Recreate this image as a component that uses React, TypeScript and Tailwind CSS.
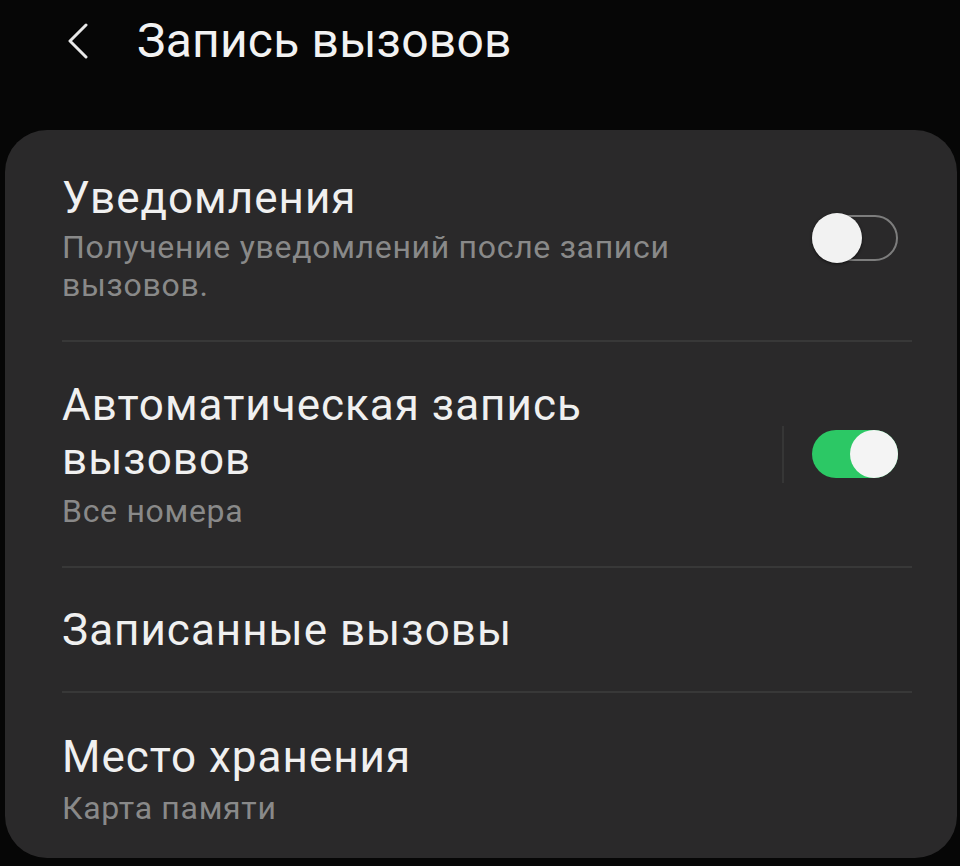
import React from 'react';

const font = { fontFamily: 'Roboto, "Noto Sans", sans-serif' };

const Toggle = ({ on }: { on: boolean }) =>
    on ? (
        <div className="relative w-[86px] h-[48px] rounded-full bg-[#2cc865] shrink-0">
            <div className="absolute right-0 top-0 w-[48px] h-[48px] rounded-full bg-[#f4f4f4]" />
        </div>
    ) : (
        <div className="relative w-[86px] h-[46px] rounded-full border-2 border-[#7d7d7d] shrink-0">
            <div className="absolute left-[-2px] top-[-4px] w-[50px] h-[50px] rounded-full bg-[#f2f2f2] shadow-[0_1px_3px_rgba(0,0,0,0.6)]" />
        </div>
    );

const Divider = () => <div className="h-[2px] bg-[#383838] ml-[57px] mr-[45px]" />;

const title = 'text-[44px] leading-[52px] tracking-[1px] text-[#f0f0f0]';
const sub = 'text-[32px] leading-[38px] tracking-[0.7px] text-[#898989]';

export default function App() {
    return (
        <div className="w-[960px] h-[866px] bg-[#060606] overflow-hidden" style={font}>
            {/* header */}
            <div className="flex items-center h-[56px] mt-[13px] pl-[67px]">
                <svg width="22" height="36" viewBox="0 0 22 36" fill="none" className="shrink-0">
                    <path d="M19 2 L3 18 L19 34" stroke="#e8e8e8" strokeWidth="3" strokeLinecap="round" strokeLinejoin="round" />
                </svg>
                <h1 className="ml-[48px] text-[48px] leading-[56px] tracking-[0.2px] text-[#f2f2f2]">Запись вызовов</h1>
            </div>

            {/* card */}
            <div className="mt-[61px] ml-[5px] mr-[3px] h-[728px] rounded-[42px] bg-[#2a292a]">
                {/* notifications */}
                <div className="flex items-center pl-[57px] pr-[59px] pt-[42px] pb-[36px]">
                    <div className="flex-1 max-w-[660px]">
                        <div className={title}>Уведомления</div>
                        <div className={`mt-[4px] ${sub}`}>Получение уведомлений после записи вызовов.</div>
                    </div>
                    <div className="ml-auto">
                        <Toggle on={false} />
                    </div>
                </div>
                <Divider />

                {/* auto record */}
                <div className="flex items-center pl-[57px] pr-[59px] pt-[36px] pb-[36px]">
                    <div className="flex-1 max-w-[620px]">
                        <div className={`${title} leading-[54px]`}>Автоматическая запись вызовов</div>
                        <div className={`mt-[6px] ${sub}`}>Все номера</div>
                    </div>
                    <div className="ml-auto flex items-center">
                        <div className="w-[2px] h-[57px] bg-[#363636] mr-[28px]" />
                        <Toggle on={true} />
                    </div>
                </div>
                <Divider />

                {/* recorded calls */}
                <div className="pl-[57px] pr-[59px] pt-[36px] pb-[35px]">
                    <div className={title}>Записанные вызовы</div>
                </div>
                <Divider />

                {/* storage */}
                <div className="pl-[57px] pr-[59px] pt-[38px]">
                    <div className={title}>Место хранения</div>
                    <div className={`mt-[6px] ${sub}`}>Карта памяти</div>
                </div>
            </div>
        </div>
    );
}
